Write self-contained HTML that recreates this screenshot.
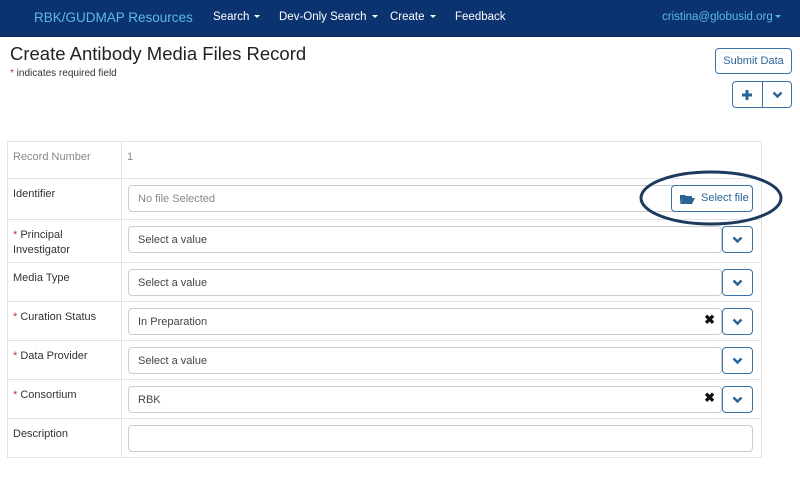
<!DOCTYPE html>
<html><head><style>
*{box-sizing:border-box;margin:0;padding:0}
body{width:800px;height:485px;background:#fff;font-family:"Liberation Sans",Arial,sans-serif;font-size:12px;color:#333;position:relative;overflow:hidden}
.nav{position:absolute;left:0;top:0;width:800px;height:37px;background:#0b3370;border-bottom:1px solid #082a5c}
.nav span{position:absolute;top:11px;color:#fff;font-size:11.5px;white-space:nowrap}
.nav .brand{left:34px;top:10px;font-size:13.5px;color:#5bb8ee}
.car{display:inline-block;border-left:3.5px solid transparent;border-right:3.5px solid transparent;border-top:3.5px solid #fff;vertical-align:middle;margin-left:5px}
h1{position:absolute;left:10px;top:43px;font-size:18.5px;font-weight:normal;color:#222}
.req{position:absolute;left:10px;top:68px;font-size:10px;color:#333}
.red{color:#c9302c}
.btn{position:absolute;border:1px solid #3b73a8;border-radius:4px;background:#fff;color:#2a6496}
table{position:absolute;left:7px;top:141px;width:755px;border-collapse:collapse;table-layout:fixed}
td{border:1px solid #e2e2e2;vertical-align:top;position:relative}
td.l{width:114px;padding:8px 0 0 5px;font-size:11px;line-height:15px;color:#333}
.inp{position:absolute;left:6px;height:27px;border:1px solid #ccc;border-radius:4px;font-size:11px;padding:7px 9px;color:#444;background:#fff}
.dd{position:absolute;right:8px;width:31px;height:27px;border:1px solid #3b73a8;border-radius:4px;background:#fff}
.x{position:absolute;right:46px;font-size:13px;font-weight:bold;color:#111}
</style></head><body>
<div class="nav">
<span class="brand">RBK/GUDMAP Resources</span>
<span style="left:213px">Search<i class="car"></i></span>
<span style="left:279px">Dev-Only Search<i class="car"></i></span>
<span style="left:390px">Create<i class="car"></i></span>
<span style="left:455px">Feedback</span>
<span style="left:662px;color:#5bb8ee">cristina@globusid.org<i class="car" style="border-top-color:#5bb8ee;margin-left:2px"></i></span>
</div>
<h1>Create Antibody Media Files Record</h1>
<div class="req"><span class="red">*</span> indicates required field</div>
<div class="btn" style="left:715px;top:48px;width:77px;height:26px;font-size:11px;text-align:center;line-height:24px">Submit Data</div>
<div class="btn" style="left:732px;top:81px;width:60px;height:27px">
<div style="position:absolute;left:29px;top:0;width:1px;height:25px;background:#3b73a8"></div>
<svg style="position:absolute;left:8px;top:7px" width="12" height="12"><path d="M6 1v10M1 6h10" stroke="#2a6496" stroke-width="3"/></svg>
<svg style="position:absolute;left:39px;top:9px" width="11" height="8"><path d="M1.5 1.5l4 4 4-4" stroke="#2a6496" stroke-width="2.5" fill="none"/></svg>
</div>
<table>
<tr style="height:37px"><td class="l" style="color:#888">Record Number</td><td style="padding:9px 0 0 5px;font-size:11px;color:#888">1</td></tr>
<tr style="height:41px"><td class="l">Identifier</td><td><div class="inp" style="top:6px;right:8px;color:#888">No file Selected</div>
<div class="btn" style="right:8px;top:6px;width:82px;height:27px;font-size:11px;line-height:25px;padding-left:29px">Select file
<svg style="position:absolute;left:8px;top:8px" width="15" height="10"><path d="M0 1h5l1 1h6v2H3L0 9z M3 4h12l-3 6H0z" fill="#2a6496"/></svg></div></td></tr>
<tr style="height:43px"><td class="l"><span class="red">*</span> Principal Investigator</td><td><div class="inp" style="top:6px;right:39px">Select a value</div><div class="dd" style="top:6px"><svg style="position:absolute;left:9px;top:9px" width="11" height="8"><path d="M1.5 1.5l4 4 4-4" stroke="#2a6496" stroke-width="2.5" fill="none"/></svg></div></td></tr>
<tr style="height:39px"><td class="l">Media Type</td><td><div class="inp" style="top:6px;right:39px">Select a value</div><div class="dd" style="top:6px"><svg style="position:absolute;left:9px;top:9px" width="11" height="8"><path d="M1.5 1.5l4 4 4-4" stroke="#2a6496" stroke-width="2.5" fill="none"/></svg></div></td></tr>
<tr style="height:39px"><td class="l"><span class="red">*</span> Curation Status</td><td><div class="inp" style="top:6px;right:39px">In Preparation</div><span class="x" style="top:10px">✖</span><div class="dd" style="top:6px"><svg style="position:absolute;left:9px;top:9px" width="11" height="8"><path d="M1.5 1.5l4 4 4-4" stroke="#2a6496" stroke-width="2.5" fill="none"/></svg></div></td></tr>
<tr style="height:39px"><td class="l"><span class="red">*</span> Data Provider</td><td><div class="inp" style="top:6px;right:39px">Select a value</div><div class="dd" style="top:6px"><svg style="position:absolute;left:9px;top:9px" width="11" height="8"><path d="M1.5 1.5l4 4 4-4" stroke="#2a6496" stroke-width="2.5" fill="none"/></svg></div></td></tr>
<tr style="height:39px"><td class="l"><span class="red">*</span> Consortium</td><td><div class="inp" style="top:6px;right:39px">RBK</div><span class="x" style="top:10px">✖</span><div class="dd" style="top:6px"><svg style="position:absolute;left:9px;top:9px" width="11" height="8"><path d="M1.5 1.5l4 4 4-4" stroke="#2a6496" stroke-width="2.5" fill="none"/></svg></div></td></tr>
<tr style="height:39px"><td class="l">Description</td><td><div class="inp" style="top:6px;right:8px"></div></td></tr>
</table>
<svg style="position:absolute;left:0;top:0" width="800" height="485"><ellipse cx="711" cy="198" rx="70" ry="26" fill="none" stroke="#1c3a5e" stroke-width="3"/></svg>
</body></html>
